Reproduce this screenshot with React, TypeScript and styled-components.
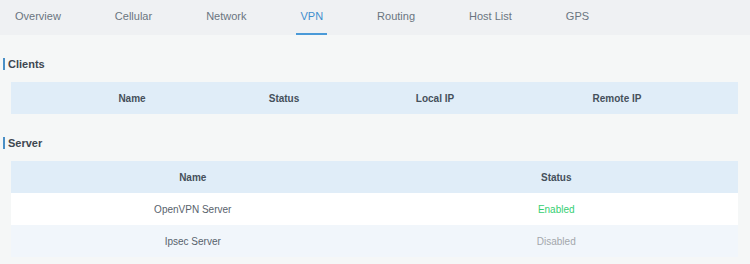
import styled, { createGlobalStyle } from "styled-components";

const GlobalStyle = createGlobalStyle`
  html, body {
    margin: 0;
    padding: 0;
    background: #f5f7f7;
    font-family: "Liberation Sans", Arial, sans-serif;
  }
`;

const Page = styled.div`
  width: 750px;
  height: 264px;
  overflow: hidden;
  background: #f5f7f7;
`;

const TabBar = styled.nav`
  display: flex;
  height: 35px;
  padding-left: 11px;
  gap: 46px;
  background: #eff1f3;
`;

const Tab = styled.div<{ $active?: boolean }>`
  box-sizing: border-box;
  height: 35px;
  padding: 0 4px;
  line-height: 33px;
  font-size: 11px;
  color: ${(p) => (p.$active ? "#3f8fce" : "#6a7580")};
  border-bottom: 2px solid ${(p) => (p.$active ? "#4a9ad8" : "transparent")};
`;

const Content = styled.main`
  display: flex;
  flex-direction: column;
  gap: 23px;
  padding: 23px 12px 0 3px;
`;

const Section = styled.section`
  display: flex;
  flex-direction: column;
  gap: 12px;
`;

const Heading = styled.h3`
  margin: 0;
  height: 12px;
  line-height: 12px;
  padding-left: 3px;
  border-left: 2px solid #4a8fc6;
  font-size: 11px;
  font-weight: 700;
  color: #3e4751;
`;

const Table = styled.div`
  margin-left: 8px;
  display: flex;
  flex-direction: column;
`;

const Row = styled.div<{ $cols: string; $bg: string }>`
  display: grid;
  grid-template-columns: ${(p) => p.$cols};
  height: 32px;
  align-items: center;
  background: ${(p) => p.$bg};
`;

const HeadCell = styled.div`
  text-align: center;
  font-size: 10px;
  font-weight: 700;
  color: #45505b;
  white-space: nowrap;
`;

const Cell = styled.div<{ $tone?: "on" | "off" }>`
  text-align: center;
  font-size: 10px;
  white-space: nowrap;
  color: ${(p) =>
    p.$tone === "on" ? "#35cf72" : p.$tone === "off" ? "#a3a7ab" : "#58626c"};
`;

const tabs = ["Overview", "Cellular", "Network", "VPN", "Routing", "Host List", "GPS"];

const clientCols = "242px 62px 240px 124px 1fr";
const serverCols = "1fr 1fr";

const servers = [
  { name: "OpenVPN Server", status: "Enabled" },
  { name: "Ipsec Server", status: "Disabled" },
];

export default function App() {
  return (
    <Page>
      <GlobalStyle />
      <TabBar>
        {tabs.map((t) => (
          <Tab key={t} $active={t === "VPN"}>
            {t}
          </Tab>
        ))}
      </TabBar>
      <Content>
        <Section>
          <Heading>Clients</Heading>
          <Table>
            <Row $cols={clientCols} $bg="#e0edf8">
              <HeadCell>Name</HeadCell>
              <HeadCell>Status</HeadCell>
              <HeadCell>Local IP</HeadCell>
              <HeadCell>Remote IP</HeadCell>
              <HeadCell />
            </Row>
          </Table>
        </Section>
        <Section>
          <Heading>Server</Heading>
          <Table>
            <Row $cols={serverCols} $bg="#e0edf8">
              <HeadCell>Name</HeadCell>
              <HeadCell>Status</HeadCell>
            </Row>
            {servers.map((s, i) => (
              <Row key={s.name} $cols={serverCols} $bg={i % 2 === 0 ? "#ffffff" : "#f1f6fb"}>
                <Cell>{s.name}</Cell>
                <Cell $tone={s.status === "Enabled" ? "on" : "off"}>{s.status}</Cell>
              </Row>
            ))}
          </Table>
        </Section>
      </Content>
    </Page>
  );
}
